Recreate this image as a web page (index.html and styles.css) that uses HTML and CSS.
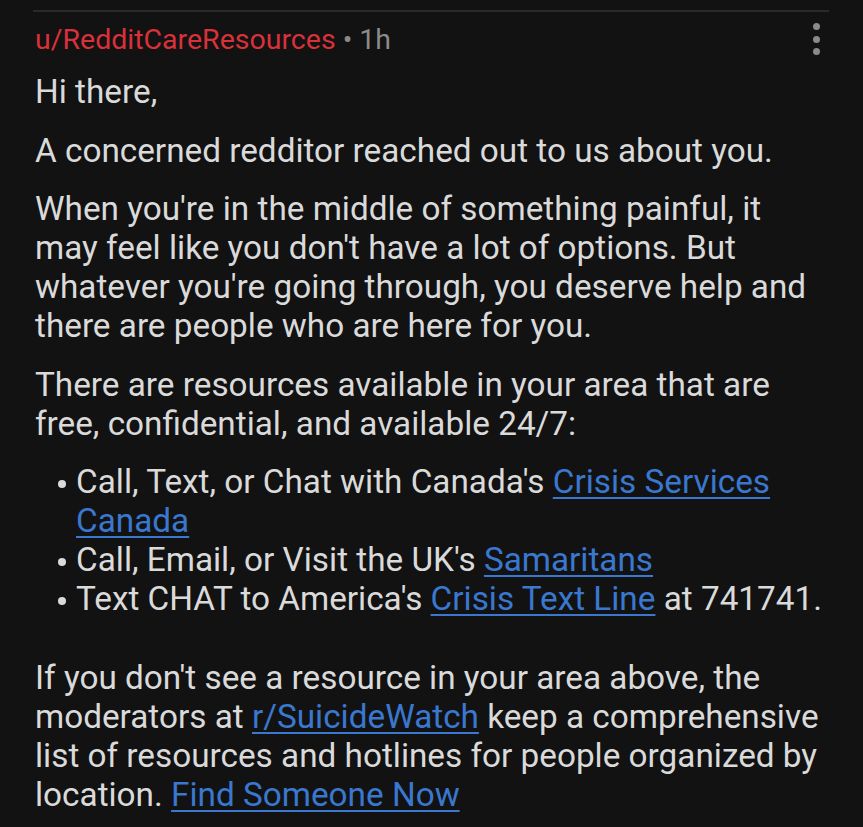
FILE: index.html
```html
<!DOCTYPE html>
<html>
<head>
    <link rel="stylesheet" href="styles.css">
</head>
<body>
    <div class="comment">
        <div class="comment-header">
            <div class="meta">
                <span class="author">u/RedditCareResources</span>
                <span class="time">&bull; 1h</span>
            </div>
            <div class="more">
                <span class="dot"></span>
                <span class="dot"></span>
                <span class="dot"></span>
            </div>
        </div>

        <div class="comment-body">
            <p>Hi there,</p>
            <p>A concerned redditor reached out to us about you.</p>
            <p>When you're in the middle of something painful, it may feel like you don't have a lot of options. But whatever you're going through, you deserve help and there are people who are here for you.</p>
            <p>There are resources available in your area that are free, confidential, and available 24/7:</p>
            <ul class="resources">
                <li>Call, Text, or Chat with Canada's <a href="#">Crisis Services Canada</a></li>
                <li>Call, Email, or Visit the UK's <a href="#">Samaritans</a></li>
                <li>Text CHAT to America's <a href="#">Crisis Text Line</a> at 741741.</li>
            </ul>
            <p class="spaced">If you don't see a resource in your area above, the moderators at <a href="#">r/SuicideWatch</a> keep a comprehensive list of resources and hotlines for people organized by location. <a href="#">Find Someone Now</a></p>
        </div>
    </div>
</body>
</html>
```

FILE: styles.css
```css
body {
    margin: 0;
    background: #121212;
    font-family: Roboto, "Liberation Sans", sans-serif;
    color: #dadada;
}

.comment {
    margin-left: 33px;
    margin-right: 34px;
    padding-top: 10px;
}

.comment-header {
    display: flex;
    justify-content: space-between;
    align-items: flex-start;
    border-top: 2px solid #2a2a2a;
}

.meta {
    padding-top: 10px;
    padding-left: 2px;
    font-size: 28.5px;
    line-height: 36px;
}

.author {
    color: #d9313a;
}

.time {
    color: #8b8b8b;
}

.more {
    display: flex;
    flex-direction: column;
    gap: 5.5px;
    padding-top: 11px;
    margin-right: 9px;
}

.dot {
    width: 7px;
    height: 7px;
    border-radius: 50%;
    background: #8a8a8a;
}

.comment-body {
    padding-top: 14px;
    padding-left: 2px;
    font-size: 33.3px;
    line-height: 39px;
}

.comment-body p {
    margin: 0 0 19.5px;
}

.comment-body a {
    color: #3a78d0;
    text-decoration: underline;
    text-underline-offset: 4px;
    text-decoration-thickness: 2px;
}

.resources {
    list-style: none;
    margin: 0;
    padding-left: 23px;
}

.resources li {
    padding-left: 18px;
    text-indent: -18px;
}

.resources li::before {
    content: "";
    display: inline-block;
    width: 8px;
    height: 8px;
    margin-right: 10px;
    border-radius: 50%;
    background: #dadada;
    vertical-align: 5px;
}

.spaced {
    margin-top: 40px !important;
}
```
